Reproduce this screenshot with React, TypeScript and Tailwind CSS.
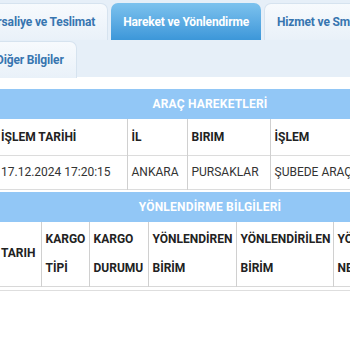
import React from 'react';

const tabs1 = ['İrsaliye ve Teslimat', 'Hareket ve Yönlendirme', 'Hizmet ve Sms Bilgileri'];

function Tab({ label, active }: { label: string; active?: boolean }) {
  return (
    <div
      className={
        active
          ? 'h-[37px] px-3 flex items-center rounded-t-[7px] bg-gradient-to-b from-[#7cc2ee] to-[#3c97d9] text-white text-[12px] font-bold tracking-[-0.15px] whitespace-nowrap'
          : 'h-[37px] px-3 flex items-center rounded-t-[7px] border border-b-0 border-[#d6e3ef] bg-gradient-to-b from-[#f7fafd] to-[#e9f1f9] text-[#3775b0] text-[12px] font-bold tracking-[-0.15px] whitespace-nowrap'
      }
    >
      {label}
    </div>
  );
}

function SectionHeader({ title }: { title: string }) {
  return (
    <div className="h-[30px] flex items-center justify-center bg-[#92c7f6] text-white text-[12px] font-bold tracking-[0.2px]">
      {title}
    </div>
  );
}

export default function App() {
  return (
    <div className="w-[350px] h-[350px] overflow-hidden bg-white" style={{ fontFamily: 'Roboto, "Noto Sans", sans-serif' }}>
      <div className="bg-[#e6eff8] pt-[3px] h-[77px]">
        <div className="-ml-[19px] w-[480px] flex flex-wrap gap-x-[3px] gap-y-[1px]">
          <Tab label={tabs1[0]} />
          <Tab label={tabs1[1]} active />
          <Tab label={tabs1[2]} />
          <div className="pl-[2px]">
            <Tab label="Diğer Bilgiler" />
          </div>
        </div>
      </div>

      <div className="-ml-[3px] w-[426px] mt-[12px]">
        <SectionHeader title="ARAÇ HAREKETLERİ" />
        <table className="table-fixed w-full border-collapse text-[12px] text-[#222]">
          <colgroup>
            <col className="w-[130px]" />
            <col className="w-[60px]" />
            <col className="w-[83px]" />
            <col />
          </colgroup>
          <tbody>
            <tr className="h-[36px] border-b border-[#dcdcdc] font-bold">
              <td className="pl-[4px] border-r border-[#d0d0d0]">İŞLEM TARİHİ</td>
              <td className="pl-[4px] border-r border-[#d0d0d0]">İL</td>
              <td className="pl-[4px] border-r border-[#d0d0d0]">BIRIM</td>
              <td className="pl-[4px]">İŞLEM</td>
            </tr>
            <tr className="h-[34px] border-b border-[#dcdcdc] text-[#333]">
              <td className="pl-[4px] border-r border-[#d0d0d0] whitespace-nowrap">17.12.2024 17:20:15</td>
              <td className="pl-[4px] border-r border-[#d0d0d0]">ANKARA</td>
              <td className="pl-[4px] border-r border-[#d0d0d0]">PURSAKLAR</td>
              <td className="pl-[4px] whitespace-nowrap">ŞUBEDE ARAÇTAN İNDİRİLDİ</td>
            </tr>
          </tbody>
        </table>

        <div className="mt-[2px]">
          <SectionHeader title="YÖNLENDİRME BİLGİLERİ" />
        </div>
        <table className="table-fixed w-full border-collapse text-[12px] text-[#222] font-bold">
          <colgroup>
            <col className="w-[44px]" />
            <col className="w-[48px]" />
            <col className="w-[59px]" />
            <col className="w-[88px]" />
            <col className="w-[97px]" />
            <col />
          </colgroup>
          <tbody>
            <tr className="h-[65px] border-b border-[#d8d8d8] leading-[29px]">
              <td className="pl-[4px] border-r border-[#d0d0d0]">TARIH</td>
              <td className="pl-[4px] border-r border-[#d0d0d0]">KARGO<br />TİPİ</td>
              <td className="pl-[4px] border-r border-[#d0d0d0]">KARGO<br />DURUMU</td>
              <td className="pl-[4px] border-r border-[#d0d0d0] whitespace-nowrap">YÖNLENDİREN<br />BİRİM</td>
              <td className="pl-[4px] border-r border-[#d0d0d0] whitespace-nowrap">YÖNLENDİRİLEN<br />BİRİM</td>
              <td className="pl-[4px] whitespace-nowrap">YÖNLENDİRME<br />NEDENİ</td>
            </tr>
          </tbody>
        </table>
        <div className="mt-[3px] border-t border-[#dedede]" />
      </div>
    </div>
  );
}
